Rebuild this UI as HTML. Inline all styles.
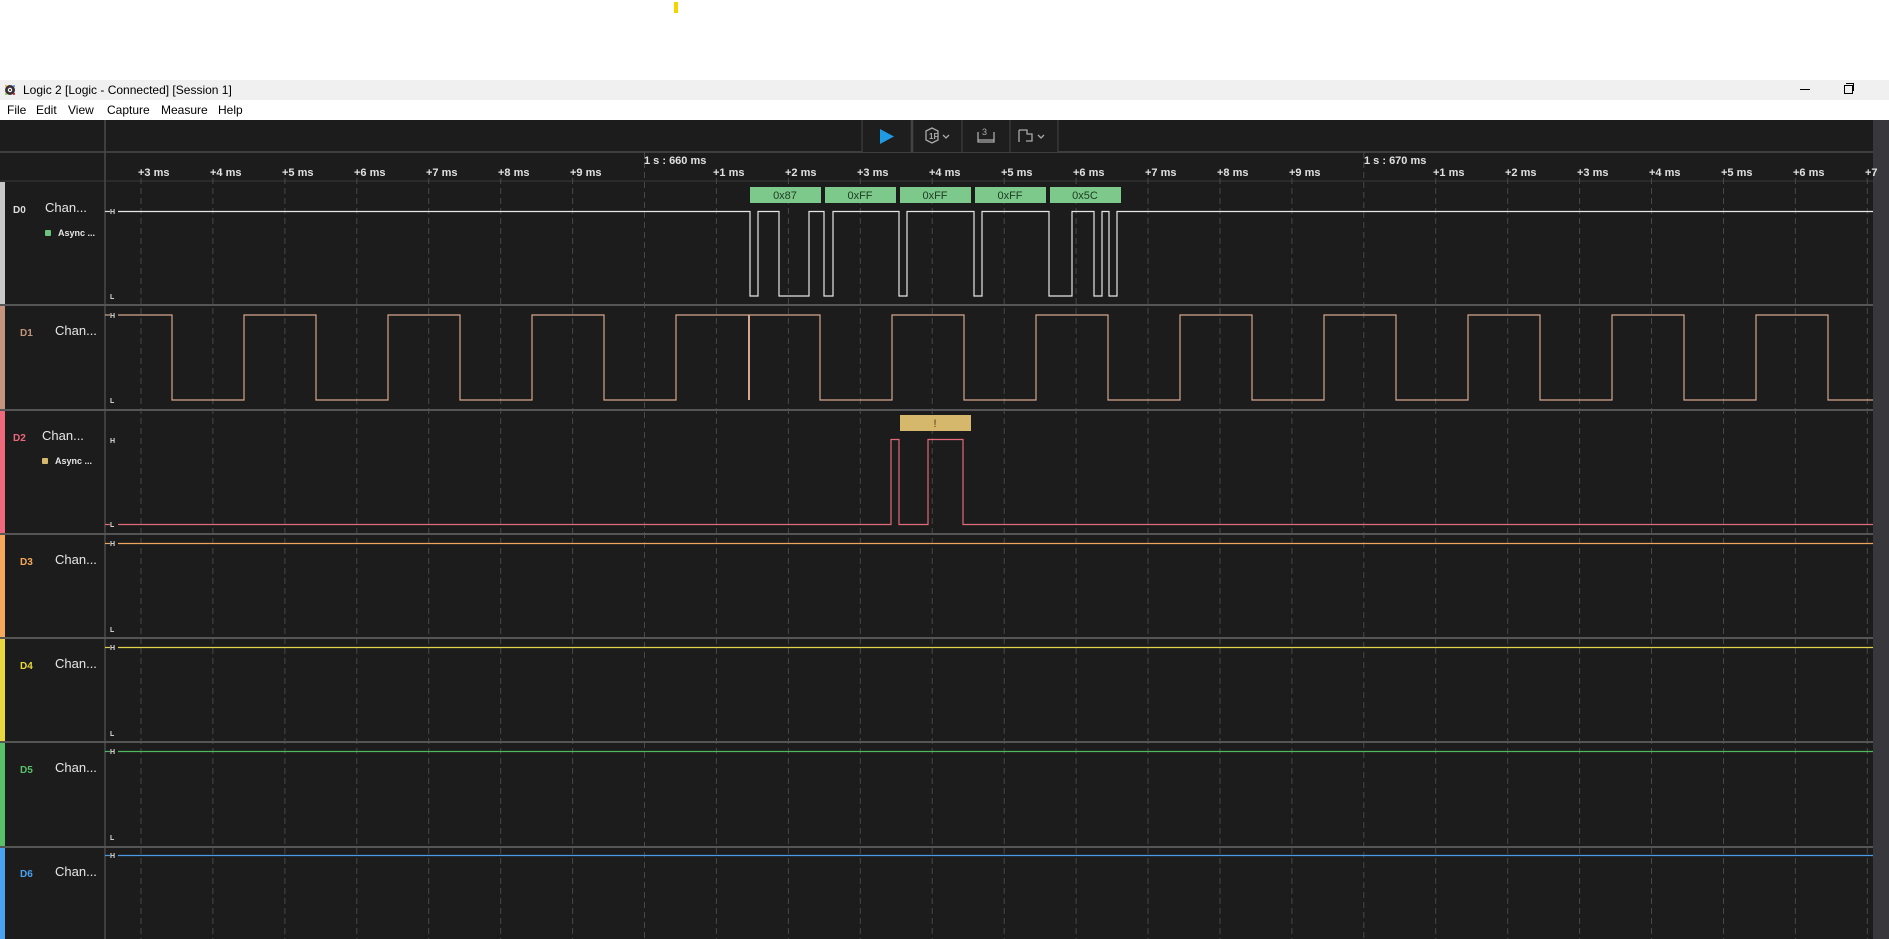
<!DOCTYPE html>
<html><head><meta charset="utf-8"><style>
html,body{margin:0;padding:0;width:1889px;height:939px;overflow:hidden;background:#fff;font-family:"Liberation Sans",sans-serif}
.abs{position:absolute}
#title{left:0;top:80px;width:1889px;height:20px;background:#f0f0f0;font-size:12px;color:#000}
#menu{left:0;top:100px;width:1889px;height:20px;background:#fff;font-size:12px;color:#000}
#dark{left:0;top:120px;width:1889px;height:819px;background:#1c1c1c}
.lbl{position:absolute;font-weight:bold;font-size:10px}
.ch{position:absolute;color:#e6e6e6;font-size:13px}
.as{position:absolute;color:#e6e6e6;font-size:9px;font-weight:bold}
</style></head><body>
<div class="abs" style="left:674px;top:2px;width:4px;height:11px;background:#f2d600"></div>
<div id="title" class="abs">
<svg class="abs" style="left:4px;top:4px" width="12" height="12" viewBox="0 0 12 12"><circle cx="6" cy="6" r="5" fill="#3a2f3a"/><circle cx="6" cy="6" r="2.2" fill="#fff"/><circle cx="6" cy="6" r="1" fill="#222"/><circle cx="2" cy="2" r="1" fill="#f5a623"/><circle cx="10" cy="2" r="1" fill="#4a90e2"/><circle cx="2" cy="10" r="1" fill="#7ed321"/><circle cx="10" cy="10" r="1" fill="#d0021b"/></svg>
<span class="abs" style="left:23px;top:3px">Logic 2 [Logic - Connected] [Session 1]</span>
<div class="abs" style="left:1800px;top:9px;width:10px;height:1px;background:#000"></div>
<div class="abs" style="left:1844px;top:5px;width:7px;height:7px;border:1px solid #000"></div>
<div class="abs" style="left:1846px;top:3px;width:7px;height:7px;border-top:1px solid #000;border-right:1px solid #000"></div>
</div>
<div id="menu" class="abs">
<span class="abs" style="left:7px;top:3px">File</span>
<span class="abs" style="left:36px;top:3px">Edit</span>
<span class="abs" style="left:68px;top:3px">View</span>
<span class="abs" style="left:107px;top:3px">Capture</span>
<span class="abs" style="left:161px;top:3px">Measure</span>
<span class="abs" style="left:218px;top:3px">Help</span>
</div>
<div id="dark" class="abs"></div>
<svg class="abs" style="left:0;top:0" width="1889" height="939" font-family="Liberation Sans, sans-serif">
<!-- right scrollbar -->
<rect x="1873" y="120" width="16" height="819" fill="#38383c"/>
<!-- header lines -->
<line x1="0" y1="152" x2="1873" y2="152" stroke="#4a4a4a" stroke-width="1.5"/>
<line x1="0" y1="181" x2="1873" y2="181" stroke="#3a3a3a" stroke-width="1"/>
<line x1="105" y1="120" x2="105" y2="939" stroke="#4a4a4a" stroke-width="1.5"/>
<!-- toolbar -->
<rect x="862" y="120" width="196" height="32" fill="#1e1e1e"/>
<g stroke="#444" stroke-width="1">
<line x1="862" y1="120" x2="862" y2="152"/><line x1="912" y1="120" x2="912" y2="152" stroke-width="2.5"/>
<line x1="962" y1="120" x2="962" y2="152"/><line x1="1010" y1="120" x2="1010" y2="152"/><line x1="1058" y1="120" x2="1058" y2="152"/>
</g>
<polygon points="880,129 880,144 894,136.5" fill="#1e9be3"/>
<g fill="none" stroke="#aaa" stroke-width="1.3">
<polygon points="926,131 932,128 938,131 938,140 932,143 926,140"/>
<path d="M943 135 l3 3 l3 -3"/>
<path d="M978 132 v10 h16 v-10 M978 140 h16"/>
<path d="M1019 130 v12 M1019 130 h8 v4 h5 v7 h-6 M1038 135 l3 3 l3 -3"/>
</g>
<text x="929" y="139" font-size="8" fill="#aaa" font-weight="bold">1F</text>
<text x="982" y="135" font-size="9" fill="#aaa">3</text>
<!-- grid -->
<g stroke="#484848" stroke-width="1" stroke-dasharray="6,4">
<line x1="141" y1="178" x2="141" y2="939"/><line x1="212.9" y1="178" x2="212.9" y2="939"/><line x1="284.9" y1="178" x2="284.9" y2="939"/><line x1="356.8" y1="178" x2="356.8" y2="939"/><line x1="428.7" y1="178" x2="428.7" y2="939"/><line x1="500.7" y1="178" x2="500.7" y2="939"/><line x1="572.6" y1="178" x2="572.6" y2="939"/><line x1="644.5" y1="152" x2="644.5" y2="939"/><line x1="716.4" y1="178" x2="716.4" y2="939"/><line x1="788.4" y1="178" x2="788.4" y2="939"/><line x1="860.3" y1="178" x2="860.3" y2="939"/><line x1="932.2" y1="178" x2="932.2" y2="939"/><line x1="1004.2" y1="178" x2="1004.2" y2="939"/><line x1="1076.1" y1="178" x2="1076.1" y2="939"/><line x1="1148" y1="178" x2="1148" y2="939"/><line x1="1220" y1="178" x2="1220" y2="939"/><line x1="1291.9" y1="178" x2="1291.9" y2="939"/><line x1="1363.8" y1="152" x2="1363.8" y2="939"/><line x1="1435.7" y1="178" x2="1435.7" y2="939"/><line x1="1507.7" y1="178" x2="1507.7" y2="939"/><line x1="1579.6" y1="178" x2="1579.6" y2="939"/><line x1="1651.5" y1="178" x2="1651.5" y2="939"/><line x1="1723.5" y1="178" x2="1723.5" y2="939"/><line x1="1795.4" y1="178" x2="1795.4" y2="939"/><line x1="1867.3" y1="178" x2="1867.3" y2="939"/>
</g>
<g font-size="11" font-weight="bold" fill="#e0e0e0">
<text x="138" y="176">+3 ms</text><text x="210" y="176">+4 ms</text><text x="282" y="176">+5 ms</text><text x="354" y="176">+6 ms</text><text x="426" y="176">+7 ms</text><text x="498" y="176">+8 ms</text><text x="570" y="176">+9 ms</text>
<text x="713" y="176">+1 ms</text><text x="785" y="176">+2 ms</text><text x="857" y="176">+3 ms</text><text x="929" y="176">+4 ms</text><text x="1001" y="176">+5 ms</text><text x="1073" y="176">+6 ms</text><text x="1145" y="176">+7 ms</text><text x="1217" y="176">+8 ms</text><text x="1289" y="176">+9 ms</text>
<text x="1433" y="176">+1 ms</text><text x="1505" y="176">+2 ms</text><text x="1577" y="176">+3 ms</text><text x="1649" y="176">+4 ms</text><text x="1721" y="176">+5 ms</text><text x="1793" y="176">+6 ms</text><text x="1865" y="176">+7</text>
<text x="644" y="164">1 s : 660 ms</text><text x="1364" y="164">1 s : 670 ms</text>
</g>
<!-- row separators -->
<g stroke="#555" stroke-width="2">
<line x1="0" y1="305" x2="1873" y2="305"/><line x1="0" y1="410" x2="1873" y2="410"/><line x1="0" y1="534" x2="1873" y2="534"/><line x1="0" y1="638" x2="1873" y2="638"/><line x1="0" y1="742" x2="1873" y2="742"/><line x1="0" y1="847" x2="1873" y2="847"/>
</g>
<!-- color bars -->
<rect x="0" y="182" width="5" height="122" fill="#c8c8c8"/>
<rect x="0" y="306" width="5" height="103" fill="#c4957c"/>
<rect x="0" y="411" width="5" height="122" fill="#f0687c"/>
<rect x="0" y="535" width="5" height="102" fill="#f8a85a"/>
<rect x="0" y="639" width="5" height="102" fill="#e8d83c"/>
<rect x="0" y="743" width="5" height="103" fill="#58c068"/>
<rect x="0" y="848" width="5" height="91" fill="#4aa2f2"/>
<!-- H/L labels -->
<g font-size="7" font-weight="bold" fill="#ddd">
<text x="110" y="214">H</text><text x="110" y="299">L</text>
<text x="110" y="318">H</text><text x="110" y="403">L</text>
<text x="110" y="443">H</text><text x="110" y="527">L</text>
<text x="110" y="546">H</text><text x="110" y="632">L</text>
<text x="110" y="650">H</text><text x="110" y="736">L</text>
<text x="110" y="754">H</text><text x="110" y="840">L</text>
<text x="110" y="858">H</text>
</g>
<!-- D0 -->
<g fill="#7dc98b">
<rect x="750" y="187" width="71" height="16"/><rect x="825" y="187" width="71" height="16"/><rect x="900" y="187" width="71" height="16"/><rect x="975" y="187" width="71" height="16"/><rect x="1050" y="187" width="71" height="16"/>
</g>
<g font-size="11" fill="#1e3a22" text-anchor="middle">
<text x="785" y="199">0x87</text><text x="860" y="199">0xFF</text><text x="935" y="199">0xFF</text><text x="1010" y="199">0xFF</text><text x="1085" y="199">0x5C</text>
</g>
<polyline fill="none" stroke="#e6e6e6" stroke-width="1.2" points="118,211.5 750,211.5 750,296 758,296 758,211.5 779,211.5 779,296 809,296 809,211.5 824,211.5 824,296 833,296 833,211.5 899,211.5 899,296 907,296 907,211.5 974,211.5 974,296 982,296 982,211.5 1049,211.5 1049,296 1072,296 1072,211.5 1094,211.5 1094,296 1102,296 1102,211.5 1109,211.5 1109,296 1117,296 1117,211.5 1873,211.5"/>
<!-- D1 -->
<polyline fill="none" stroke="#d4a68a" stroke-width="1.2" points="118,315 172,315 172,400 244,400 244,315 316,315 316,400 388,400 388,315 460,315 460,400 532,400 532,315 604,315 604,400 676,400 676,315 820,315 820,400 892,400 892,315 964,315 964,400 1036,400 1036,315 1108,315 1108,400 1180,400 1180,315 1252,315 1252,400 1324,400 1324,315 1396,315 1396,400 1468,400 1468,315 1540,315 1540,400 1612,400 1612,315 1684,315 1684,400 1756,400 1756,315 1828,315 1828,400 1873,400"/>
<line x1="749" y1="315" x2="749" y2="400" stroke="#d4a68a" stroke-width="2"/>
<!-- D2 -->
<rect x="900" y="415" width="71" height="16" fill="#d6b86c"/>
<text x="935" y="427" font-size="11" fill="#5a3a1a" text-anchor="middle">!</text>
<polyline fill="none" stroke="#e26a7a" stroke-width="1.2" points="118,524.5 891,524.5 891,439.5 899,439.5 899,524.5 928,524.5 928,439.5 963,439.5 963,524.5 1873,524.5"/>
<!-- D3-D6 -->
<line x1="118" y1="543.5" x2="1873" y2="543.5" stroke="#f0a55c" stroke-width="1.2"/>
<line x1="118" y1="647.5" x2="1873" y2="647.5" stroke="#e2d24a" stroke-width="1.2"/>
<line x1="118" y1="751.5" x2="1873" y2="751.5" stroke="#4fb85e" stroke-width="1.2"/>
<line x1="118" y1="855.5" x2="1873" y2="855.5" stroke="#4a9ae6" stroke-width="1.2"/>
<g stroke-width="1.2">
<line x1="105" y1="211.5" x2="110" y2="211.5" stroke="#ddd"/><line x1="105" y1="315" x2="110" y2="315" stroke="#d4a68a"/><line x1="105" y1="524.5" x2="110" y2="524.5" stroke="#e26a7a"/><line x1="105" y1="543.5" x2="110" y2="543.5" stroke="#f0a55c"/><line x1="105" y1="647.5" x2="110" y2="647.5" stroke="#e2d24a"/><line x1="105" y1="751.5" x2="110" y2="751.5" stroke="#4fb85e"/><line x1="105" y1="855.5" x2="110" y2="855.5" stroke="#4a9ae6"/>
</g>
<!-- left labels -->
<g font-size="10" font-weight="bold">
<text x="13" y="213" fill="#ddd">D0</text>
<text x="20" y="336" fill="#c4957c">D1</text>
<text x="13" y="441" fill="#f0687c">D2</text>
<text x="20" y="565" fill="#f8a85a">D3</text>
<text x="20" y="669" fill="#e8d83c">D4</text>
<text x="20" y="773" fill="#58c068">D5</text>
<text x="20" y="877" fill="#4aa2f2">D6</text>
</g>
<g font-size="13" fill="#e6e6e6">
<text x="45" y="212">Chan...</text>
<text x="55" y="335">Chan...</text>
<text x="42" y="440">Chan...</text>
<text x="55" y="564">Chan...</text>
<text x="55" y="668">Chan...</text>
<text x="55" y="772">Chan...</text>
<text x="55" y="876">Chan...</text>
</g>
<rect x="45" y="230" width="6" height="6" rx="1" fill="#6dc47e"/>
<rect x="42" y="458" width="6" height="6" rx="1" fill="#d6b86c"/>
<g font-size="9" font-weight="bold" fill="#e6e6e6">
<text x="58" y="236">Async ...</text>
<text x="55" y="464">Async ...</text>
</g>
</svg>
</body></html>
